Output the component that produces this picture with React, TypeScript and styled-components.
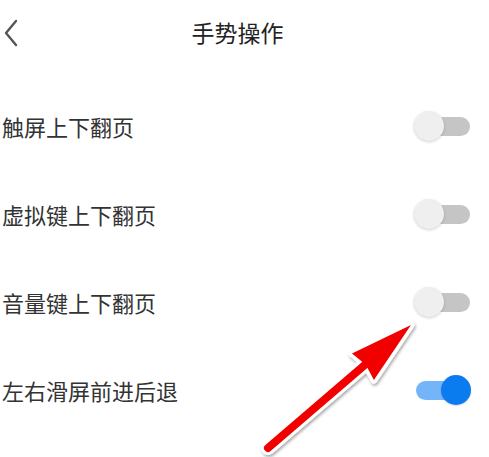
import styled, { createGlobalStyle } from "styled-components";

const GlobalStyle = createGlobalStyle`
  html, body {
    margin: 0;
    padding: 0;
    background: #ffffff;
    font-family: "Noto Sans CJK SC", "Noto Sans", sans-serif;
  }
`;

type Setting = {
  label: string;
  on: boolean;
};

const settings: Setting[] = [
  { label: "触屏上下翻页", on: false },
  { label: "虚拟键上下翻页", on: false },
  { label: "音量键上下翻页", on: false },
  { label: "左右滑屏前进后退", on: true },
];

export default function App() {
  return (
    <>
      <GlobalStyle />
      <Page>
        <Header>
          <BackButton aria-label="返回">
            <svg width="16" height="28" viewBox="0 0 16 28">
              <path
                d="M13 2 L3 14 L13 26"
                fill="none"
                stroke="#555"
                strokeWidth="2.4"
                strokeLinecap="round"
                strokeLinejoin="round"
              />
            </svg>
          </BackButton>
          <Title>手势操作</Title>
        </Header>

        <List>
          {settings.map((s) => (
            <Row key={s.label}>
              <Label>{s.label}</Label>
              <Switch $on={s.on}>
                <Track $on={s.on} />
                <Knob $on={s.on} />
              </Switch>
            </Row>
          ))}
        </List>

        <Arrow viewBox="0 0 489 457" width="489" height="457">
          <g filter="url(#shadow)">
            <line x1="268" y1="448" x2="365" y2="364.7" stroke="#fff" strokeWidth="14" strokeLinecap="round" />
            <polygon
              points="411,325 352,353.5 362.2,361.7 367.4,367.7 373.9,380"
              fill="#fff"
              stroke="#fff"
              strokeWidth="7"
              strokeLinejoin="round"
            />
            <line x1="268" y1="448" x2="365" y2="364.7" stroke="#f20000" strokeWidth="8" strokeLinecap="round" />
            <polygon
              points="411,325 352,353.5 362.2,361.7 367.4,367.7 373.9,380"
              fill="#f20000"
            />
          </g>
          <defs>
            <filter id="shadow" x="-20%" y="-20%" width="140%" height="140%">
              <feDropShadow dx="1" dy="2" stdDeviation="1.5" floodColor="#000" floodOpacity="0.35" />
            </filter>
          </defs>
        </Arrow>
      </Page>
    </>
  );
}

const Page = styled.main`
  position: relative;
  width: 489px;
  height: 457px;
  overflow: hidden;
  background: #ffffff;
`;

const Header = styled.header`
  height: 64px;
  display: flex;
  align-items: center;
  padding-left: 3px;
`;

const BackButton = styled.div`
  width: 16px;
  height: 28px;
  display: flex;
  align-items: center;
  margin-top: 1px;
`;

const Title = styled.h1`
  flex: 1;
  margin: 0;
  padding-right: 33px;
  text-align: center;
  font-size: 23px;
  font-weight: 400;
  color: #222;
  line-height: 1;
`;

const List = styled.section`
  padding-top: 18px;
`;

const Row = styled.div`
  height: 88px;
  display: flex;
  align-items: center;
  justify-content: space-between;
  padding: 0 18px 0 2px;
`;

const Label = styled.span`
  font-size: 22px;
  color: #333;
  line-height: 1;
`;

const Switch = styled.div<{ $on: boolean }>`
  position: relative;
  width: 57px;
  height: 30px;
`;

const Track = styled.div<{ $on: boolean }>`
  position: absolute;
  top: 5.5px;
  left: ${(p) => (p.$on ? "2px" : "0")};
  right: ${(p) => (p.$on ? "2px" : "1px")};
  height: 19px;
  border-radius: 10px;
  background: ${(p) => (p.$on ? "#73b5f8" : "#c5c5c5")};
`;

const Knob = styled.div<{ $on: boolean }>`
  position: absolute;
  top: 0;
  left: ${(p) => (p.$on ? "27px" : "0")};
  width: 30px;
  height: 30px;
  border-radius: 50%;
  background: ${(p) => (p.$on ? "#0b7bf0" : "#efefef")};
  box-shadow: ${(p) => (p.$on ? "0 1px 2px rgba(0,0,0,0.15)" : "0 1px 3px rgba(0,0,0,0.18)")};
`;

const Arrow = styled.svg`
  position: absolute;
  top: 0;
  left: 0;
  pointer-events: none;
`;
